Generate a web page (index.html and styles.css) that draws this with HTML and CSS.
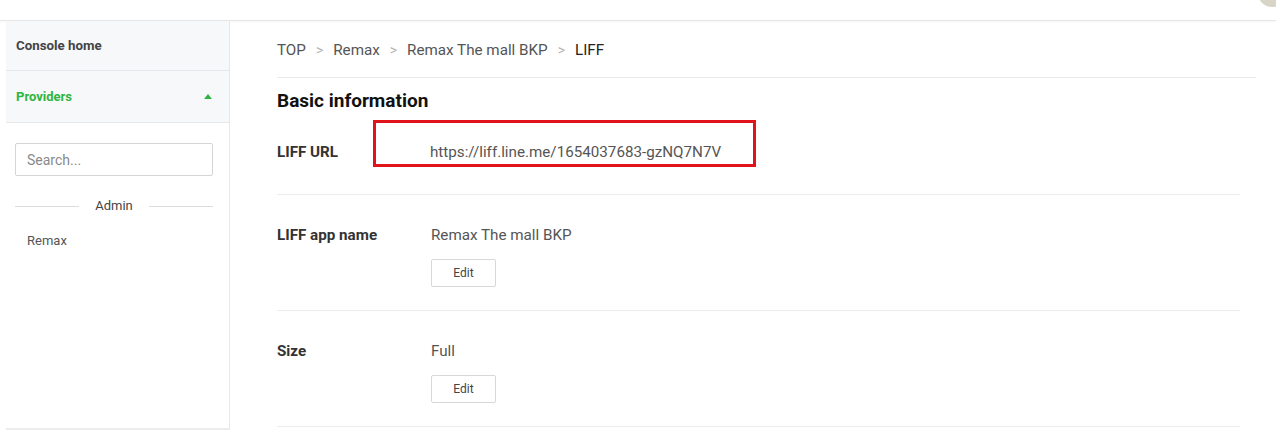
FILE: index.html
```html
<!DOCTYPE html>
<html lang="en">
<head>
<meta charset="utf-8">
<title>LIFF - Remax The mall BKP</title>
<link rel="stylesheet" href="styles.css">
</head>
<body>
<header class="topbar">
  <div class="avatar"></div>
</header>
<div class="layout">
  <aside class="sidebar">
    <div class="side-item">Console home</div>
    <div class="side-item side-active">
      <span>Providers</span>
      <svg class="caret" width="8" height="5" viewBox="0 0 8 5"><path d="M0 5 L4 0 L8 5 Z" fill="#2fb53f"/></svg>
    </div>
    <div class="side-body">
      <input class="search" type="text" placeholder="Search...">
      <div class="divider"><span class="line"></span><span class="divider-text">Admin</span><span class="line"></span></div>
      <div class="provider">Remax</div>
    </div>
  </aside>
  <main class="main">
    <nav class="crumbs">
      <span>TOP</span><span class="sep">&gt;</span><span>Remax</span><span class="sep">&gt;</span><span>Remax The mall BKP</span><span class="sep">&gt;</span><span class="crumb-current">LIFF</span>
    </nav>
    <h2 class="section-title">Basic information</h2>
    <div class="row row-url">
      <div class="label">LIFF URL</div>
      <div class="value">https://liff.line.me/1654037683-gzNQ7N7V</div>
    </div>
    <div class="row">
      <div class="label">LIFF app name</div>
      <div class="value-col">
        <div class="value">Remax The mall BKP</div>
        <button class="btn">Edit</button>
      </div>
    </div>
    <div class="row">
      <div class="label">Size</div>
      <div class="value-col">
        <div class="value">Full</div>
        <button class="btn">Edit</button>
      </div>
    </div>
    <div class="highlight"></div>
  </main>
</div>
</body>
</html>
```

FILE: styles.css
```css
* { box-sizing: border-box; }
html, body { margin: 0; padding: 0; }
body {
  font-family: Roboto, "Liberation Sans", Arial, sans-serif;
  font-size: 14px;
  color: #333;
  background: #fff;
  height: 433px;
  overflow: hidden;
  position: relative;
}
.topbar {
  height: 21px;
  border-bottom: 1px solid #e6e6e6;
  box-shadow: 0 1px 2px rgba(0,0,0,0.04);
  display: flex;
  justify-content: flex-end;
  overflow: hidden;
}
.avatar {
  width: 28px;
  height: 28px;
  border-radius: 50%;
  background: #d9d5c6;
  margin-top: -21px;
  margin-right: -10px;
  flex: none;
}
.layout {
  display: flex;
  align-items: flex-start;
}
.sidebar {
  margin-left: 6px;
  width: 224px;
  height: 409px;
  border-right: 1px solid #e8e8e8;
  border-bottom: 2px solid #ececec;
  flex: none;
}
.side-item {
  height: 51px;
  background: #f7f8fa;
  border-bottom: 1px solid #e5e7ea;
  display: flex;
  align-items: center;
  justify-content: space-between;
  padding: 0 17px 0 10px;
  font-size: 13px;
  font-weight: 700;
  color: #444;
}
.side-item:first-child { height: 50px; font-size: 13.3px; }
.side-active { height: 52px; color: #2fb53f; }
.caret { display: block; }
.side-body {
  padding: 20px 16px 0 9px;
}
.search {
  display: block;
  width: 198px;
  height: 33px;
  border: 1px solid #d5d5d5;
  border-radius: 2px;
  padding: 0 11px;
  font-family: inherit;
  font-size: 14px;
  color: #333;
  outline: none;
}
.search::placeholder { color: #8a8a8a; }
.divider {
  display: flex;
  align-items: center;
  width: 198px;
  margin-top: 22px;
  gap: 16px;
}
.line { flex: 1; height: 1px; background: #dcdcdc; }
.divider-text { font-size: 13px; color: #444; line-height: 16px; }
.provider {
  margin-top: 19px;
  padding-left: 12px;
  font-size: 13px;
  color: #555;
}
.main {
  flex: 1;
  padding: 0 20px 0 47px;
  position: relative;
}
.crumbs {
  height: 57px;
  border-bottom: 1px solid #e9e9e9;
  display: flex;
  align-items: center;
  gap: 10px;
  font-size: 15.2px;
  color: #555;
  padding-top: 2px;
}
.sep { color: #b5b5b5; font-size: 14px; }
.crumb-current { color: #222; }
.section-title {
  margin: 11px 0 0;
  font-size: 19px;
  font-weight: 700;
  color: #111;
  line-height: 24px;
}
.row {
  display: flex;
  margin-right: 16px;
  border-bottom: 1px solid #ececec;
  padding: 30px 0 23px;
  font-size: 15.2px;
}
.row-url { padding: 29px 0 32px; }
.label {
  width: 153px;
  flex: none;
  font-weight: 700;
  color: #333;
  line-height: 20px;
}
.value { line-height: 20px; color: #555; }
.value-col { display: flex; flex-direction: column; align-items: flex-start; padding-left: 1px; }
.btn {
  margin-top: 14px;
  width: 65px;
  height: 28px;
  border: 1px solid #d8d8d8;
  border-radius: 2px;
  background: #fff;
  font-family: inherit;
  font-size: 12px;
  color: #444;
  padding: 0;
}
.highlight {
  position: absolute;
  left: 143px;
  top: 99px;
  width: 383px;
  height: 47px;
  border: 3px solid #e1141b;
  pointer-events: none;
}
```
